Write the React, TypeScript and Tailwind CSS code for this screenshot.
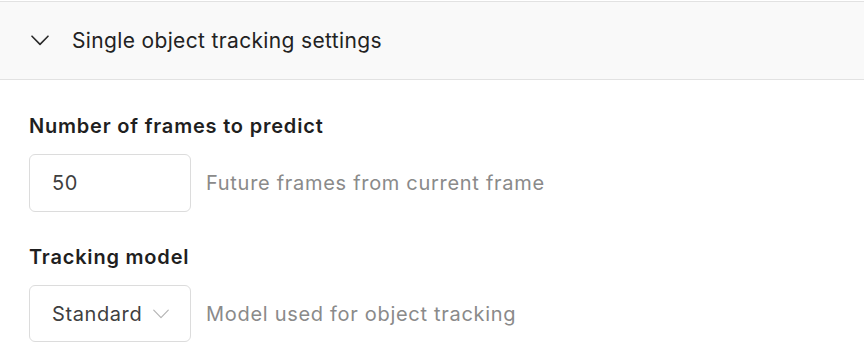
import React from "react";

const Chevron: React.FC<{ className?: string; stroke?: string; width?: number }> = ({
    className,
    stroke = "#2a2a2a",
    width = 1.6,
}) => (
    <svg viewBox="0 0 18 11" className={className} fill="none">
        <path d="M1 1.2 L9 9.4 L17 1.2" stroke={stroke} strokeWidth={width} strokeLinecap="round" strokeLinejoin="round" />
    </svg>
);

const Field: React.FC<{ label: string; helper: string; children: React.ReactNode }> = ({
    label,
    helper,
    children,
}) => (
    <div className="flex flex-col">
        <div className="text-[20px] leading-[24px] font-semibold tracking-[0.8px] text-[#1f1f1f]">{label}</div>
        <div className="mt-4 flex items-center">
            {children}
            <span className="ml-[15px] text-[20px] tracking-[0.7px] text-[#8a8a8a]">{helper}</span>
        </div>
    </div>
);

export default function App() {
    return (
        <div className="w-[864px] h-[356px] bg-white font-['Inter',sans-serif] overflow-hidden">
            <div className="h-px bg-white" />
            {/* Collapsible section header */}
            <div className="h-[79px] border-y border-[#e2e2e2] bg-[#f9f9f9] flex items-center pl-[31px]">
                <Chevron className="w-[18px] h-[11px]" />
                <span className="ml-[23px] text-[21px] tracking-[0.35px] text-[#222222]">Single object tracking settings</span>
            </div>

            <div className="px-[29px] pt-[34px] flex flex-col gap-[33px]">
                <Field label="Number of frames to predict" helper="Future frames from current frame">
                    <div className="w-[162px] h-[58px] rounded-md border border-[#dcdcdc] flex items-center pl-[22px] text-[20px] tracking-[0.6px] text-[#3f3f3f]">
                        50
                    </div>
                </Field>
                <Field label="Tracking model" helper="Model used for object tracking">
                    <div className="w-[162px] h-[57px] rounded-md border border-[#dcdcdc] flex items-center pl-[22px] text-[20px] tracking-[0.6px] text-[#3f3f3f]">
                        Standard
                        <Chevron className="ml-[10px] w-[18px] h-[10px]" stroke="#b4b4b4" width={1.3} />
                    </div>
                </Field>
            </div>
        </div>
    );
}
